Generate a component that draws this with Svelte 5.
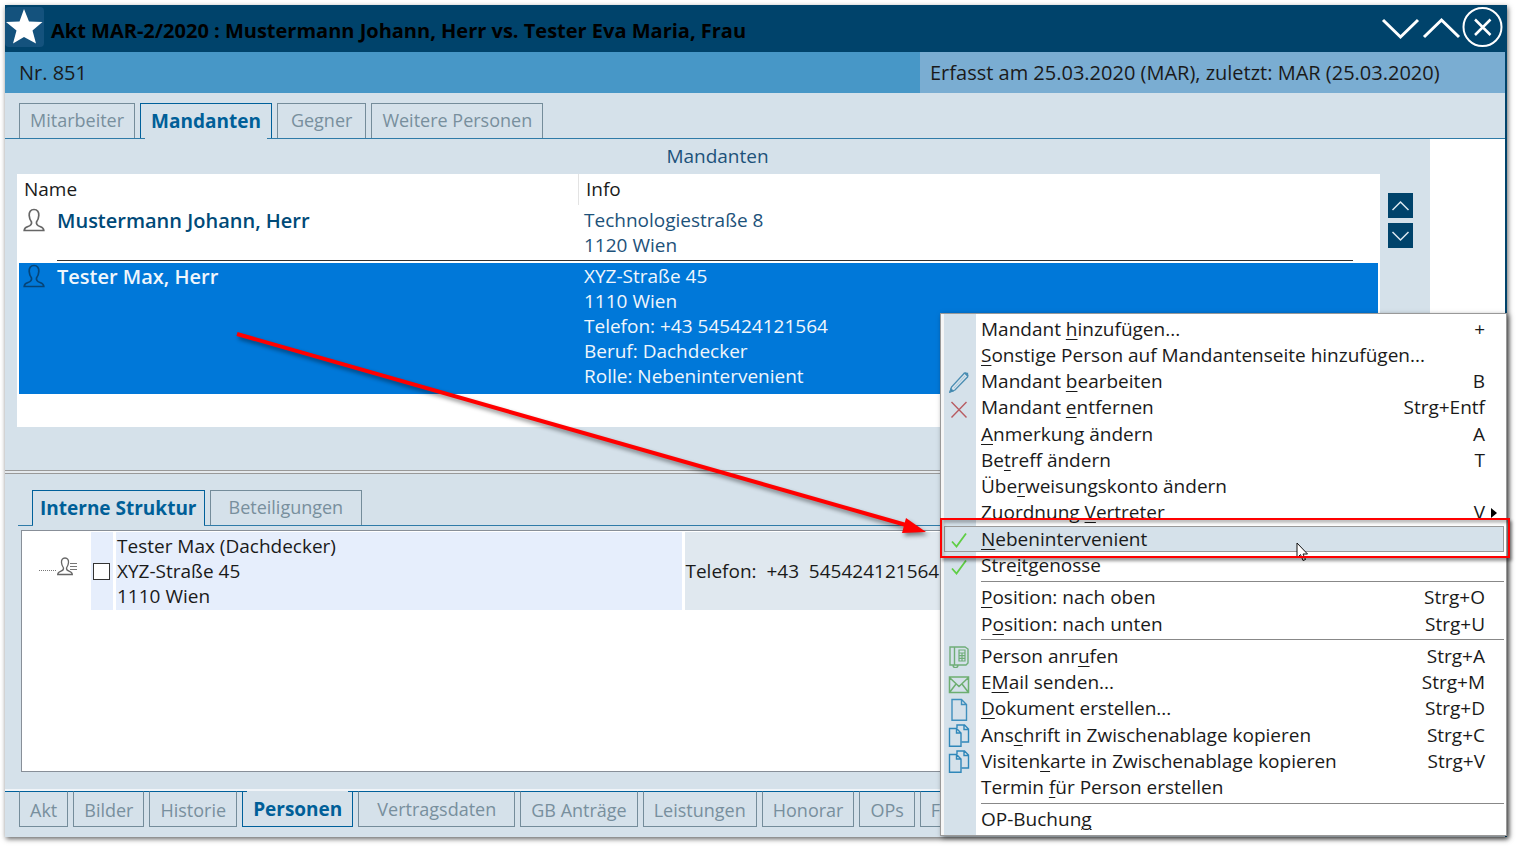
<script>
  let personTabs = ['Mitarbeiter', 'Mandanten', 'Gegner', 'Weitere Personen']
  let structureTabs = ['Interne Struktur', 'Beteiligungen']
  let fileTabs = ['Akt', 'Bilder', 'Historie', 'Personen', 'Vertragsdaten', 'GB Anträge', 'Leistungen', 'Honorar', 'OPs', 'Fr']
  let wideTabs = ['Gegner', 'Beteiligungen', 'Vertragsdaten']

  let activePerson = 'Mandanten'
  let activeStructure = 'Interne Struktur'
  let activeFile = 'Personen'

  let clients = [
    {name: 'Mustermann Johann, Herr', info: ['Technologiestraße 8', '1120 Wien']},
    {
      name: 'Tester Max, Herr',
      info: ['XYZ-Straße 45', '1110 Wien', 'Telefon: +43 545424121564', 'Beruf: Dachdecker', 'Rolle: Nebenintervenient']
    }
  ]
  let selected = 1
  let checked = false

  // label is split as [before, mnemonic, after]
  let menu = [
    {label: ['Mandant ', 'h', 'inzufügen...'], key: '+'},
    {label: ['', 'S', 'onstige Person auf Mandantenseite hinzufügen...']},
    {label: ['Mandant ', 'b', 'earbeiten'], key: 'B', icon: 'pencil'},
    {label: ['Mandant ', 'e', 'ntfernen'], key: 'Strg+Entf', icon: 'cross'},
    {label: ['', 'A', 'nmerkung ändern'], key: 'A'},
    {label: ['Be', 't', 'reff ändern'], key: 'T'},
    {label: ['Übe', 'r', 'weisungskonto ändern']},
    {label: ['Zuordnung ', 'V', 'ertreter'], key: 'V', sub: true},
    {label: ['', 'N', 'ebenintervenient'], icon: 'check', current: true},
    {label: ['Stre', 'i', 'tgenosse'], icon: 'check'},
    {separator: true},
    {label: ['', 'P', 'osition: nach oben'], key: 'Strg+O'},
    {label: ['P', 'o', 'sition: nach unten'], key: 'Strg+U'},
    {separator: true},
    {label: ['Person anr', 'u', 'fen'], key: 'Strg+A', icon: 'phone'},
    {label: ['E', 'M', 'ail senden...'], key: 'Strg+M', icon: 'mail'},
    {label: ['', 'D', 'okument erstellen...'], key: 'Strg+D', icon: 'doc'},
    {label: ['Ans', 'c', 'hrift in Zwischenablage kopieren'], key: 'Strg+C', icon: 'copy'},
    {label: ['Visiten', 'k', 'arte in Zwischenablage kopieren'], key: 'Strg+V', icon: 'copy'},
    {label: ['Termin ', 'f', 'ür Person erstellen']},
    {separator: true},
    {label: ['OP-Buchun', 'g', '']}
  ]
</script>

<main>
  <header>
    <svg class="star" viewBox="0 0 39 40" aria-hidden="true">
      <rect width="39" height="40" rx="4" fill="#14527d" />
      <path d="M19 2 L24 14.500 L37.500 15 L27.500 23.500 L31 36.500 L19 30 L8 36.500 L11.500 23.500 L1 15 L14.500 14.500 Z" fill="#fff" />
    </svg>
    <h1>Akt MAR-2/2020 : Mustermann Johann, Herr vs. Tester Eva Maria, Frau</h1>
    <button class="tool" aria-label="Nächster Akt">
      <svg viewBox="0 0 41 40"><path d="M3 13 L20.500 30 L38 13" fill="none" stroke="#fff" stroke-width="3" /></svg>
    </button>
    <button class="tool" aria-label="Voriger Akt">
      <svg viewBox="0 0 41 40"><path d="M3 30 L20.500 13 L38 30" fill="none" stroke="#fff" stroke-width="3" /></svg>
    </button>
    <button class="tool" aria-label="Schließen">
      <svg viewBox="0 0 41 40">
        <circle cx="20.500" cy="20" r="19" fill="none" stroke="#fff" stroke-width="2" />
        <path d="M13 12.500 L28.500 28 M28.500 12.500 L13 28" stroke="#fff" stroke-width="2.500" />
      </svg>
    </button>
  </header>

  <div class="subbar">
    <p>Nr. 851</p>
    <p class="created">Erfasst am 25.03.2020 (MAR), zuletzt: MAR (25.03.2020)</p>
  </div>

  <nav class="tabs top">
    {#each personTabs as tab}
      <button class:active={tab === activePerson} class:wide={wideTabs.includes(tab)} on:click={() => activePerson = tab}>{tab}</button>
    {/each}
  </nav>

  <section class="clients">
    <div class="client-panel">
      <h2>Mandanten</h2>
      <div class="client-row">
        <div class="list">
          <table>
            <thead>
              <tr>
                <th class="name-col"><span>Name</span></th>
                <th><span class="divided">Info</span></th>
              </tr>
            </thead>
            <tbody>
              {#each clients as client, i}
                {#if i > 0}
                  <tr class="rule"><td colspan="2"><hr></td></tr>
                {/if}
                <tr class:selected={i === selected} on:click={() => selected = i}>
                  <td>
                    <div class="name">
                      <svg viewBox="0 0 22 24" aria-hidden="true">
                        <path d="M11 1.500 C7.500 1.500 6 4 6.200 7.500 C6.300 10 7 12 8.500 14 C9 16.500 8 17.500 5 18.500 C2.500 19.300 1.300 20 1.200 22.500 L20.800 22.500 C20.700 20 19.500 19.300 17 18.500 C14 17.500 13 16.500 13.500 14 C15 12 15.700 10 15.800 7.500 C16 4 14.500 1.500 11 1.500 Z" fill="none" stroke="currentColor" stroke-width="1.700" />
                      </svg>
                      <strong>{client.name}</strong>
                    </div>
                  </td>
                  <td class="info">
                    {#each client.info as line}
                      <div>{line}</div>
                    {/each}
                  </td>
                </tr>
              {/each}
            </tbody>
          </table>
        </div>
        <div class="movers">
          <button aria-label="Nach oben">
            <svg viewBox="0 0 25 25"><path d="M4.500 17 L12.500 9 L20.500 17" fill="none" stroke="#dce8f0" stroke-width="1.500" /></svg>
          </button>
          <button aria-label="Nach unten">
            <svg viewBox="0 0 25 25"><path d="M4.500 9 L12.500 17 L20.500 9" fill="none" stroke="#dce8f0" stroke-width="1.500" /></svg>
          </button>
        </div>
      </div>
    </div>
  </section>

  <div class="splitter"></div>

  <section class="structure">
    <nav class="tabs inner">
      {#each structureTabs as tab}
        <button class:active={tab === activeStructure} class:wide={wideTabs.includes(tab)} on:click={() => activeStructure = tab}>{tab}</button>
      {/each}
    </nav>
    <div class="tree">
      <div class="node">
        <svg viewBox="0 0 40 22" aria-hidden="true">
          <path d="M0 14.500 H17" stroke="#777" stroke-dasharray="1 1" />
          <path d="M26 2 C23.300 2 22.300 4 22.500 6.500 C22.600 9 23.500 10.500 24.500 12 C24.800 14 24 14.500 21.500 15.300 C19.500 16 18.800 16.500 18.700 18.500 L33.300 18.500 C33.200 16.500 32.500 16 30.500 15.300 C28 14.500 27.200 14 27.500 12 C28.500 10.500 29.400 9 29.500 6.500 C29.700 4 28.700 2 26 2 Z" fill="none" stroke="#666" stroke-width="1.300" />
          <path d="M31 7.500 H38 M31 10.500 H38 M31 13.500 H38" stroke="#777" />
        </svg>
      </div>
      <div class="tick"><input type="checkbox" id="person" bind:checked></div>
      <label for="person">Tester Max (Dachdecker)<br>XYZ-Straße 45<br>1110 Wien</label>
      <div class="contact">Telefon:  +43  545424121564</div>
    </div>
  </section>

  <nav class="tabs bottom">
    {#each fileTabs as tab}
      <button class:active={tab === activeFile} class:wide={wideTabs.includes(tab)} on:click={() => activeFile = tab}>{tab}</button>
    {/each}
  </nav>

  <ul class="menu">
    {#each menu as item}
      {#if item.separator}
        <li class="separator"></li>
      {:else}
        <li class:current={item.current}>
          <button>
            <span class="icon">
              {#if item.icon === 'pencil'}
                <svg viewBox="0 0 22 24" fill="none" stroke="#4a8db2" stroke-width="1.300">
                  <path d="M2 22 L3.500 17 L16 3.500 C17.500 2 21 4.500 19.500 7 L7 20 Z" />
                  <path d="M6 18 L17 6" stroke="#a9c8da" stroke-width="1" />
                  <path d="M2 22 L3 19 L5 21 Z M17 3.500 L19.500 3.500 L19.500 6 Z" fill="#2878a5" />
                </svg>
              {:else if item.icon === 'cross'}
                <svg viewBox="0 0 22 24" fill="none" stroke="#b85c62" stroke-width="1.400"><path d="M3.500 6 L18.500 21.500 M18.500 6 L3.500 21.500" /></svg>
              {:else if item.icon === 'check'}
                <svg viewBox="0 0 22 24" fill="none" stroke="#5fce45" stroke-width="1.800"><path d="M4 14.500 L8.500 19.500 L18 6.500" /></svg>
              {:else if item.icon === 'phone'}
                <svg viewBox="0 0 22 24" fill="none" stroke="#6fad78" stroke-width="1.400">
                  <path d="M2 3 H6.500 V21 H2 Z M6.500 3 H17 L20 5 V19 L18 21 H6.500 M5 21 C5 24.500 10 24.500 10 21" />
                  <path d="M11 6 H17 V17 H11 Z M11 9 H17 M11 11.700 H17 M11 14.400 H17 M14 9 V17" stroke-width="1.200" />
                </svg>
              {:else if item.icon === 'mail'}
                <svg viewBox="0 0 22 24" fill="none" stroke="#6dae70" stroke-width="1.500"><path d="M1.500 6 H20.500 V21.500 H1.500 Z M1.500 6.500 L11 15.500 L20.500 6.500 M1.500 21.500 L8 13 M20.500 21.500 L14 13" /></svg>
              {:else if item.icon === 'doc'}
                <svg viewBox="0 0 22 24" fill="none" stroke="#3f8fbd" stroke-width="1.400"><path d="M4 2.500 H13.500 L18.500 7.500 V23.300 H4 Z M13.500 2.500 V7.500 H18.500" /></svg>
              {:else if item.icon === 'copy'}
                <svg viewBox="0 0 22 24" fill="none" stroke="#2f87b9" stroke-width="1.400">
                  <path d="M9 5 V2 H16.500 L20.500 6 V19 H13.500 M16 2 V6.500 H20.500" />
                  <path d="M1.500 5.500 H8.500 L13 10 V23.300 H1.500 Z M8.500 5.500 V10 H13" />
                </svg>
              {/if}
            </span>
            <span>{item.label[0]}<u>{item.label[1]}</u>{item.label[2]}</span>
            <span class="key">{item.key || ''}</span>
            <span class="sub">
              {#if item.sub}
                <svg viewBox="0 0 6 10"><path d="M0 0 L6 5 L0 10 Z" /></svg>
              {/if}
            </span>
          </button>
          {#if item.current}
            <svg class="cursor" viewBox="0 0 12 20"><path d="M1 1 V16 L4.500 12.500 L7 18.500 L9.500 17.500 L7 12 H11.500 Z" fill="#fff" stroke="#111" /></svg>
          {/if}
        </li>
      {/if}
    {/each}
  </ul>

  <svg class="arrow" viewBox="0 0 700 210" aria-hidden="true">
    <path d="M7 6 L676 197" stroke="#f00" stroke-width="4" />
    <path d="M676 190 L696 204 L672 205 Z" fill="#f00" />
  </svg>
</main>

<style>
  :global(body) {
    background: #fff;
  }
  main {
    position: relative;
    display: flex;
    flex-direction: column;
    box-sizing: border-box;
    min-height: calc(100vh - 14px);
    margin: 5px 9px 9px 5px;
    border-right: 2px solid #00436b;
    background: #d5e1ea;
    box-shadow: 1px 2px 5px rgba(0, 0, 0, .6);
    color: #1a1a1a;
    font: 19px/25px "Open Sans", sans-serif;
  }
  h1, h2, p, ul {
    margin: 0;
    padding: 0;
    font-weight: normal;
  }
  button {
    padding: 0;
    border: 0;
    background: none;
    color: inherit;
    font: inherit;
  }
  svg {
    display: block;
  }

  header {
    display: flex;
    height: 47px;
    margin-right: -2px;
    padding: 2px 4px 0 0;
    box-sizing: border-box;
    background: #00436b;
  }
  h1 {
    flex: 1;
    padding-left: 7px;
    color: #000;
    font-size: 20px;
    font-weight: 700;
    line-height: 48px;
  }
  .star {
    width: 39px;
    height: 40px;
  }
  .tool {
    width: 41px;
    height: 40px;
  }

  .subbar {
    display: flex;
    background: #4797c7;
    font-size: 20px;
    line-height: 41px;
  }
  .subbar p {
    flex: 1;
    padding-left: 14px;
  }
  .subbar .created {
    flex: 0 0 39%;
    box-sizing: border-box;
    padding-left: 10px;
    background: #7aadd2;
  }

  .tabs {
    display: flex;
    gap: 5px;
    padding-left: 14px;
  }
  .tabs button {
    position: relative;
    box-sizing: border-box;
    height: 36px;
    padding: 0 10px;
    border: 1px solid #748c9a;
    color: #788f9d;
    font-size: 18px;
    line-height: 32px;
    white-space: nowrap;
  }
  .tabs .wide {
    padding: 0 18px;
  }
  .tabs .active {
    border-color: #00609a;
    color: #005f98;
    font-size: 19px;
    font-weight: 700;
  }
  .tabs .active::after {
    content: "";
    position: absolute;
    left: 4px;
    right: 4px;
    height: 2px;
    background: #d5e1ea;
  }
  .top {
    padding-top: 10px;
    border-bottom: 1px solid #2f7ba8;
  }
  .top button, .inner button {
    height: 35px;
    padding-bottom: 2px;
    border-bottom: 0;
  }
  .tabs.top .active {
    padding-bottom: 0;
  }
  .top .active::after, .inner .active::after {
    bottom: -1px;
  }
  .top .wide {
    padding: 0 13px 2px;
  }
  .inner {
    margin-left: 13px;
    padding-left: 14px;
    border-bottom: 1px solid #2f7ba8;
  }
  .inner .wide {
    padding-bottom: 3px;
  }
  .inner .active {
    padding: 0 7px;
  }
  .inner .active::after {
    left: 0;
    right: 0;
  }
  .bottom {
    overflow: hidden;
    margin-top: 17px;
    padding-bottom: 10px;
    border-top: 2px solid #f0f4f8;
    box-shadow: inset 0 1px #00609a;
  }
  .bottom button {
    padding-top: 2px;
    border-top-color: #00609a;
  }
  .bottom .active {
    padding-top: 0;
  }
  .bottom .active::after {
    top: -1px;
  }

  .clients {
    background: #fff;
  }
  .client-panel {
    box-sizing: border-box;
    min-height: 331px;
    margin-right: 75px;
    padding: 5px 17px 0 12px;
    background: #d5e1ea;
  }
  h2 {
    padding: 0 0 5px 5px;
    color: #1d527a;
    font-size: 19px;
    text-align: center;
  }
  .client-row {
    display: flex;
    gap: 8px;
  }
  .list {
    flex: 1;
    min-height: 253px;
    padding: 0 2px;
    background: #fff;
  }
  .list table {
    width: 100%;
    border-collapse: collapse;
  }
  th {
    padding: 0 0 2px;
    font-weight: normal;
    text-align: left;
  }
  th span {
    display: block;
    padding-left: 5px;
    line-height: 31px;
  }
  .divided {
    border-left: 1px solid #e3e3e3;
    padding-left: 7px;
  }
  .name-col {
    width: 559px;
  }
  td {
    padding: 1px 0 0;
    vertical-align: top;
  }
  .name {
    display: flex;
    color: #004a78;
  }
  .name svg {
    width: 22px;
    height: 24px;
    margin: 0 12px 0 4px;
    color: #666;
  }
  .name strong {
    font-size: 20px;
    font-weight: 600;
  }
  .info {
    padding-left: 6px;
    color: #1d527a;
  }
  .rule td {
    padding: 0;
  }
  hr {
    height: 1px;
    margin: 2px 25px 2px 38px;
    border: 0;
    background: #333;
  }
  .selected {
    background: #0078d9;
  }
  .selected td {
    padding-bottom: 5px;
  }
  .selected .name, .selected .info {
    color: #f0f6fc;
  }
  .selected .name svg {
    color: #064477;
  }
  .movers {
    display: flex;
    flex-direction: column;
    gap: 5px;
    padding-top: 19px;
  }
  .movers button {
    width: 25px;
    height: 25px;
    background: #00436b;
  }

  .splitter {
    height: 2px;
    border-top: 1px solid #999;
    border-bottom: 1px solid #999;
    background: #e4e9ed;
  }
  .structure {
    display: flex;
    flex: 1;
    flex-direction: column;
    padding-top: 16px;
  }
  .tree {
    display: grid;
    flex: 1;
    grid-template-columns: 66px 22px 12fr 17fr;
    align-content: start;
    gap: 3px;
    margin: 4px 16px 0;
    padding-top: 1px;
    border: 1px solid #888f98;
    background: #fff;
  }
  .node, .tick, .contact {
    display: flex;
    align-items: center;
  }
  .node svg {
    width: 40px;
    height: 22px;
    margin: 0 0 8px 17px;
  }
  .tick, label {
    background: #e6eefc;
  }
  .tick input {
    width: 17px;
    height: 17px;
    margin: 0 0 0 2px;
    border: 1px solid #333;
    background: #fff;
    appearance: none;
  }
  .tick input:checked {
    background: #0078d9;
  }
  label {
    padding: 2px 1px 1px;
  }
  .contact {
    background: #e0e8ef;
    white-space: pre;
  }

  .menu {
    position: absolute;
    top: 308px;
    right: -2px;
    bottom: 1px;
    display: flex;
    flex-direction: column;
    box-sizing: border-box;
    width: 567px;
    padding: 2px 2px 2px 3px;
    border: 1px solid #999;
    background: linear-gradient(90deg, #f6f6f6 3px, #d5e1ea 3px, #d5e1ea 35px, #fff 35px);
    box-shadow: 2px 2px 5px rgba(0, 0, 0, .5);
    list-style: none;
  }
  .menu li {
    position: relative;
    flex: 1 1 26px;
  }
  .menu button {
    display: grid;
    grid-template-columns: 37px 1fr auto 19px;
    align-items: center;
    width: 100%;
    height: 100%;
    text-align: left;
    white-space: nowrap;
  }
  .menu u {
    text-decoration-thickness: 1px;
    text-underline-offset: 3px;
  }
  .icon svg {
    width: 22px;
    height: 24px;
    margin-left: 4px;
  }
  .sub svg {
    width: 6px;
    height: 10px;
    margin-left: 6px;
  }
  .menu .separator {
    flex: 0 0 6px;
    margin-left: 37px;
    background: linear-gradient(#888, #888) 0 2px / 100% 1px no-repeat;
  }
  .current button {
    background: #d5e1ea;
    box-shadow: inset 0 0 0 1px #999;
  }
  .current::after {
    content: "";
    position: absolute;
    z-index: 1;
    inset: -8px -6px -6px -4px;
    border: 2px solid #f00;
    box-shadow: 2px 3px 3px rgba(0, 0, 0, .4), inset 2px 3px 3px rgba(0, 0, 0, .25);
  }
  .cursor {
    position: absolute;
    top: 16px;
    right: 196px;
    width: 12px;
    height: 20px;
  }
  .arrow {
    position: absolute;
    top: 323px;
    right: 575px;
    width: 700px;
    height: 210px;
    filter: drop-shadow(2px 3px 2px rgba(0, 0, 0, .45));
    pointer-events: none;
  }
</style>
